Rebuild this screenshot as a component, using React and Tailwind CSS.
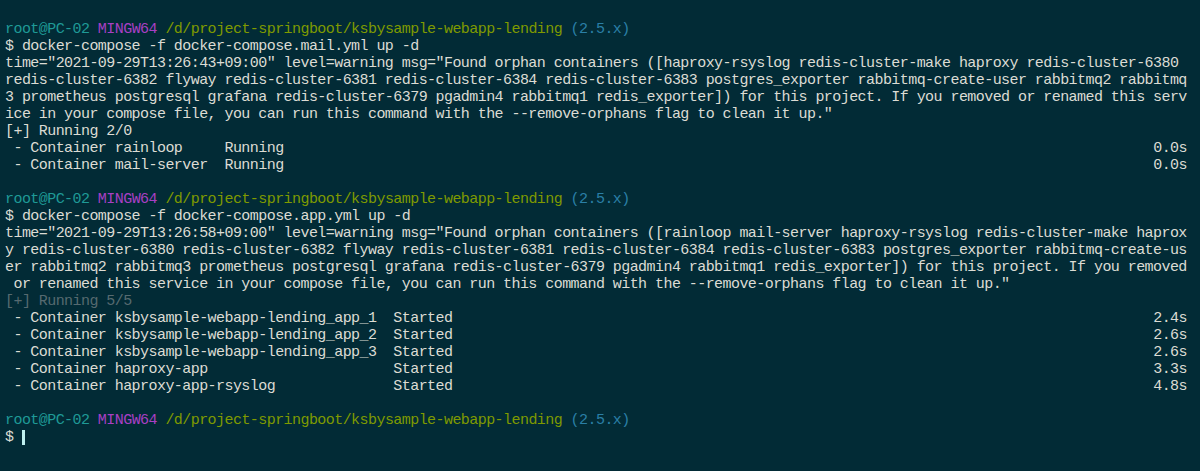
import React from "react";

const Prompt = () => (
  <div className="h-[17px] leading-[17px] whitespace-pre">
    <span className="text-[#1f9a96]">root@PC-02 </span>
    <span className="text-[#a83fc4]">MINGW64 </span>
    <span className="text-[#7f9a00]">/d/project-springboot/ksbysample-webapp-lending </span>
    <span className="text-[#2a7fa6]">(2.5.x)</span>
  </div>
);

const Line = ({ children, className = "" }) => (
  <div className={`h-[17px] leading-[17px] whitespace-pre ${className}`}>{children}</div>
);

const Row = ({ left, time }) => (
  <div className="flex justify-between h-[17px] leading-[17px] whitespace-pre">
    <span>{left}</span>
    <span>{time}</span>
  </div>
);

const App = () => {
  return (
    <div
      className="w-[1200px] h-[471px] bg-[#022b36] text-[#dcdcd4] pt-[21px] pl-[5px] text-[15px] tracking-[-0.56px] overflow-hidden"
      style={{ fontFamily: '"Liberation Mono", "DejaVu Sans Mono", monospace' }}
    >
      <div className="w-[1182px]">
        <Prompt />
        <Line>$ docker-compose -f docker-compose.mail.yml up -d</Line>
        <Line>time="2021-09-29T13:26:43+09:00" level=warning msg="Found orphan containers ([haproxy-rsyslog redis-cluster-make haproxy redis-cluster-6380</Line>
        <Line>redis-cluster-6382 flyway redis-cluster-6381 redis-cluster-6384 redis-cluster-6383 postgres_exporter rabbitmq-create-user rabbitmq2 rabbitmq</Line>
        <Line>3 prometheus postgresql grafana redis-cluster-6379 pgadmin4 rabbitmq1 redis_exporter]) for this project. If you removed or renamed this serv</Line>
        <Line>ice in your compose file, you can run this command with the --remove-orphans flag to clean it up."</Line>
        <Line>[+] Running 2/0</Line>
        <Row left=" - Container rainloop     Running" time="0.0s" />
        <Row left=" - Container mail-server  Running" time="0.0s" />
        <Line> </Line>
        <Prompt />
        <Line>$ docker-compose -f docker-compose.app.yml up -d</Line>
        <Line>time="2021-09-29T13:26:58+09:00" level=warning msg="Found orphan containers ([rainloop mail-server haproxy-rsyslog redis-cluster-make haprox</Line>
        <Line>y redis-cluster-6380 redis-cluster-6382 flyway redis-cluster-6381 redis-cluster-6384 redis-cluster-6383 postgres_exporter rabbitmq-create-us</Line>
        <Line>er rabbitmq2 rabbitmq3 prometheus postgresql grafana redis-cluster-6379 pgadmin4 rabbitmq1 redis_exporter]) for this project. If you removed</Line>
        <Line> or renamed this service in your compose file, you can run this command with the --remove-orphans flag to clean it up."</Line>
        <Line className="text-[#566a70]">[+] Running 5/5</Line>
        <Row left=" - Container ksbysample-webapp-lending_app_1  Started" time="2.4s" />
        <Row left=" - Container ksbysample-webapp-lending_app_2  Started" time="2.6s" />
        <Row left=" - Container ksbysample-webapp-lending_app_3  Started" time="2.6s" />
        <Row left=" - Container haproxy-app                      Started" time="3.3s" />
        <Row left=" - Container haproxy-app-rsyslog              Started" time="4.8s" />
        <Line> </Line>
        <Prompt />
        <div className="flex items-center h-[17px] leading-[17px] whitespace-pre">
          <span>$ </span>
          <span className="inline-block w-[3px] h-[15px] bg-[#bff0f0] ml-[0.5px]" />
        </div>
      </div>
    </div>
  );
};

export default App;
